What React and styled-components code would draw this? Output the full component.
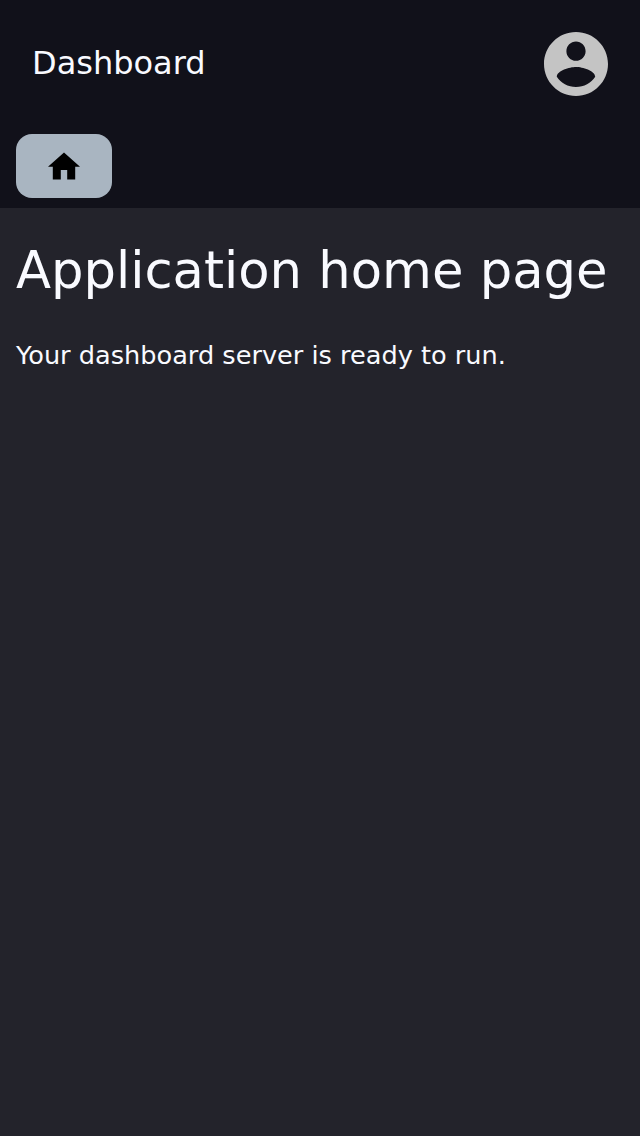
import React from "react";
import styled, { createGlobalStyle } from "styled-components";

const GlobalStyle = createGlobalStyle`
  body {
    margin: 0;
    background: #23232b;
    color: #f9faff;
    font-family: "DejaVu Sans", sans-serif;
  }
  *, *::before, *::after { box-sizing: border-box; }
`;

const Page = styled.div`
  min-height: 100vh;
  display: flex;
  flex-direction: column;
`;

const Header = styled.header`
  height: 208px;
  background: #11111a;
`;

const TitleBar = styled.div`
  display: flex;
  align-items: center;
  justify-content: space-between;
  height: 128px;
  padding: 0 32px;
`;

const AppTitle = styled.span`
  font-size: 32px;
  line-height: 38px;
  padding-bottom: 2px;
`;

const AccountButton = styled.button`
  display: flex;
  padding: 0;
  border: 0;
  background: none;
  color: #c4c4c4;
`;

const AccountIcon = styled.svg`
  width: 64px;
  height: 64px;
  fill: currentColor;
`;

const Nav = styled.nav`
  display: flex;
  padding: 6px 16px 10px;
`;

const NavButton = styled.a`
  display: flex;
  align-items: center;
  justify-content: center;
  width: 96px;
  height: 64px;
  border-radius: 16px;
  background: #a9b5c1;
  color: #000;
`;

const HomeIcon = styled.svg`
  width: 32px;
  height: 32px;
  fill: currentColor;
`;

const Content = styled.main`
  padding: 32px 16px;
`;

const Heading = styled.h1`
  margin: 0;
  font-size: 51.2px;
  line-height: 60px;
  font-weight: 400;
  white-space: nowrap;
`;

const Message = styled.p`
  margin: 40px 0 0;
  font-size: 25.6px;
  line-height: 30px;
`;

export default function App() {
  return (
    <Page>
      <GlobalStyle />
      <Header>
        <TitleBar>
          <AppTitle>Dashboard</AppTitle>
          <AccountButton aria-label="Account">
            <AccountIcon viewBox="2 2 20 20">
              <path d="M12 2C6.48 2 2 6.48 2 12s4.48 10 10 10 10-4.48 10-10S17.52 2 12 2zm0 3c1.66 0 3 1.34 3 3s-1.34 3-3 3-3-1.34-3-3 1.34-3 3-3zm0 14.2c-2.5 0-4.71-1.28-6-3.22.03-1.99 4-3.08 6-3.08 1.99 0 5.97 1.09 6 3.08-1.29 1.94-3.5 3.22-6 3.22z" />
            </AccountIcon>
          </AccountButton>
        </TitleBar>
        <Nav>
          <NavButton aria-label="Home">
            <HomeIcon viewBox="2 1.5 20 20">
              <path d="M10 20v-6h4v6h5v-8h3L12 3 2 12h3v8z" />
            </HomeIcon>
          </NavButton>
        </Nav>
      </Header>
      <Content>
        <Heading>Application home page</Heading>
        <Message>Your dashboard server is ready to run.</Message>
      </Content>
    </Page>
  );
}
